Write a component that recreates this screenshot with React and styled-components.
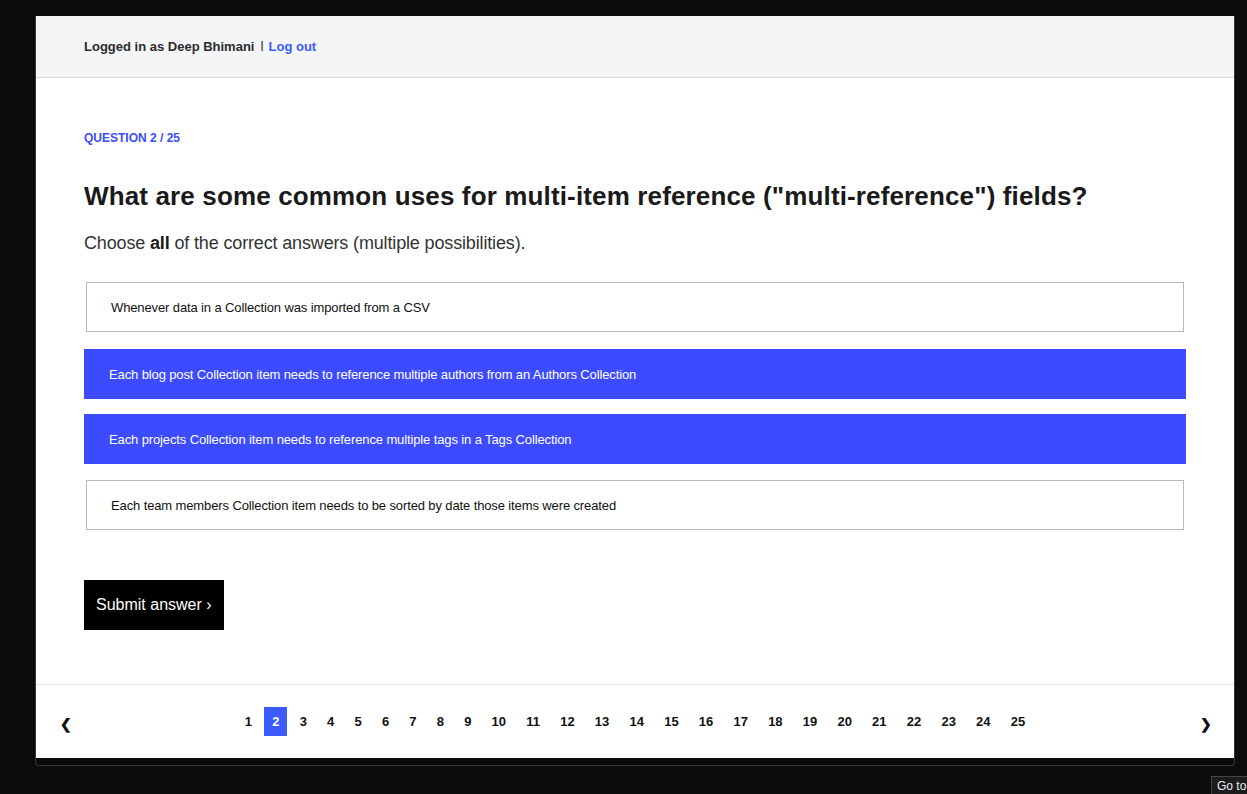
import React from 'react';
import styled, { createGlobalStyle } from 'styled-components';

const GlobalStyle = createGlobalStyle`
  html, body {
    margin: 0;
    padding: 0;
    background: #0c0c0c;
    font-family: "Liberation Sans", Arial, sans-serif;
  }
`;

const options = [
  { text: 'Whenever data in a Collection was imported from a CSV', selected: false },
  { text: 'Each blog post Collection item needs to reference multiple authors from an Authors Collection', selected: true },
  { text: 'Each projects Collection item needs to reference multiple tags in a Tags Collection', selected: true },
  { text: 'Each team members Collection item needs to be sorted by date those items were created', selected: false },
];

const pages = Array.from({ length: 25 }, (_, i) => i + 1);

const App = () => {
  return (
    <Screen>
      <GlobalStyle />
      <Frame>
        <Panel>
          <Header>
            <UserName>Logged in as Deep Bhimani</UserName>
            <Divider>|</Divider>
            <LogOut href="#">Log out</LogOut>
          </Header>

          <Content>
            <Label>QUESTION 2 / 25</Label>
            <Title>What are some common uses for multi-item reference ("multi-reference") fields?</Title>
            <Hint>Choose <b>all</b> of the correct answers (multiple possibilities).</Hint>

            <OptionList>
              {options.map((o) => (
                <Option key={o.text} selected={o.selected}>{o.text}</Option>
              ))}
            </OptionList>

            <SubmitButton type="button">Submit answer ›</SubmitButton>
          </Content>

          <Footer>
            <Arrow>❮</Arrow>
            <Pages>
              {pages.map((p) => (
                <PageNum key={p} active={p === 2}>{p}</PageNum>
              ))}
            </Pages>
            <Arrow>❯</Arrow>
          </Footer>
        </Panel>
      </Frame>
      <Tooltip>Go to</Tooltip>
    </Screen>
  );
};

const Screen = styled.div`
  position: relative;
  width: 1247px;
  height: 794px;
  overflow: hidden;
  background: #0c0c0c;
  padding: 16px 12px 0 35px;
  box-sizing: border-box;
`;

const Frame = styled.div`
  width: 1200px;
  box-sizing: border-box;
  border: 1px solid #363636;
  border-top: none;
  border-radius: 0 0 4px 4px;
  padding-bottom: 7px;
`;

const Panel = styled.div`
  background: #fff;
`;

const Header = styled.div`
  height: 61px;
  display: flex;
  align-items: center;
  padding-left: 48px;
  background: #f4f5f7;
  border-bottom: 1px solid #d6d9de;
  font-size: 13px;
`;

const UserName = styled.span`
  font-weight: 700;
  color: #2c2c2c;
`;

const Divider = styled.span`
  margin: 0 5px 0 6px;
  font-size: 11px;
  font-weight: 700;
  color: #555;
  position: relative;
  top: -2px;
`;

const LogOut = styled.a`
  color: #3b5bfd;
  font-weight: 600;
  text-decoration: none;
`;

const Content = styled.div`
  padding: 51px 48px 54px 48px;
  border-bottom: 1px solid #e2e7eb;
`;

const Label = styled.div`
  font-size: 12px;
  line-height: 18px;
  font-weight: 700;
  color: #3d4dfc;
`;

const Title = styled.h1`
  margin: 33px 0 0;
  font-size: 26px;
  line-height: 32px;
  font-weight: 700;
  letter-spacing: 0.14px;
  color: #1a1a1a;
`;

const Hint = styled.p`
  margin: 19px 0 0;
  font-size: 18px;
  line-height: 24px;
  letter-spacing: -0.15px;
  color: #333;
  b { color: #1a1a1a; }
`;

const OptionList = styled.div`
  margin-top: 26px;
  display: flex;
  flex-direction: column;
  gap: 15px;
`;

const Option = styled.div`
  height: 50px;
  box-sizing: border-box;
  display: flex;
  align-items: center;
  padding-left: 24px;
  font-size: 13px;
  letter-spacing: -0.12px;
  margin: ${(p) => (p.selected ? '0' : '1px 2px 2px 2px')};
  border: 1px solid ${(p) => (p.selected ? '#3d4bff' : '#b9b9b9')};
  background: ${(p) => (p.selected ? '#3d4bff' : '#fff')};
  color: ${(p) => (p.selected ? '#fff' : '#111')};
`;

const SubmitButton = styled.button`
  margin-top: 48px;
  height: 50px;
  padding: 0 12px;
  border: none;
  border-radius: 0;
  background: #000;
  color: #fff;
  font-family: "Liberation Sans", Arial, sans-serif;
  font-size: 16px;
  cursor: pointer;
`;

const Footer = styled.div`
  height: 73px;
  display: flex;
  align-items: center;
  justify-content: space-between;
  padding: 0 24px;
`;

const Arrow = styled.span`
  width: 10px;
  font-size: 14px;
  font-weight: 700;
  color: #111;
  position: relative;
  top: 2px;
`;

const Pages = styled.div`
  display: flex;
  align-items: center;
  gap: 4.2px;
`;

const PageNum = styled.span`
  height: 29px;
  padding: 0 8px;
  display: flex;
  align-items: center;
  font-size: 13px;
  font-weight: 700;
  color: ${(p) => (p.active ? '#fff' : '#111')};
  background: ${(p) => (p.active ? '#3b5bfd' : 'transparent')};
`;

const Tooltip = styled.div`
  position: absolute;
  left: 1211px;
  top: 776px;
  padding: 2px 5px;
  background: #1c1c1c;
  border: 1px solid #444;
  color: #eee;
  font-size: 12px;
  white-space: nowrap;
`;

export default App;
